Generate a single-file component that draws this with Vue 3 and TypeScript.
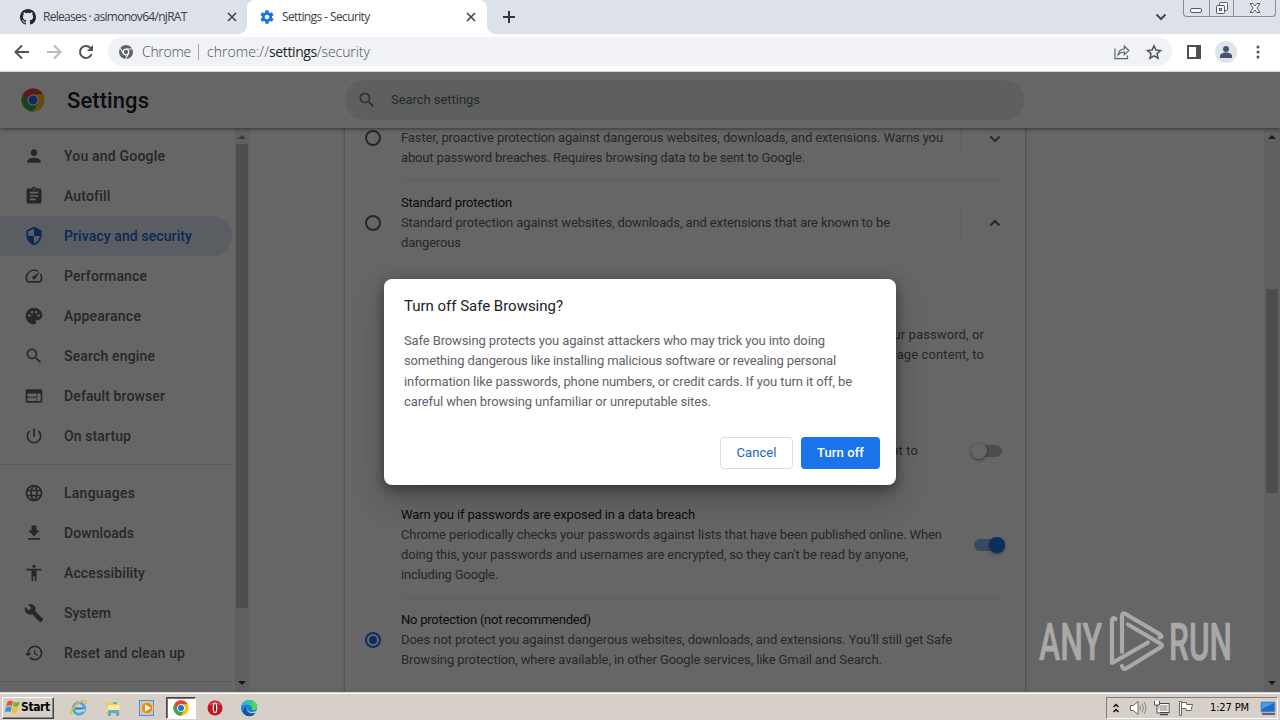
<script setup lang="ts">
import type { Directive } from 'vue'

interface MenuItem { label: string; width: number; icon: string; selected?: boolean }
interface TextLine { text: string; width: number }

// Adjusts tracking so that a single line occupies the given width.
const vFit: Directive<HTMLElement, number> = {
  mounted(el, binding) {
    const natural = el.getBoundingClientRect().width
    const count = (el.textContent ?? '').trim().length
    if (count > 1) el.style.letterSpacing = `${((binding.value - natural) / (count - 0.5)).toFixed(3)}px`
  },
}

const primaryMenu: MenuItem[] = [
  { label: 'You and Google', width: 101, icon: 'M12 12c2.21 0 4-1.79 4-4s-1.79-4-4-4-4 1.79-4 4 1.79 4 4 4zm0 2c-2.67 0-8 1.34-8 4v2h16v-2c0-2.66-5.33-4-8-4z' },
  { label: 'Autofill', width: 46, icon: 'M19 3h-4.18C14.4 1.84 13.3 1 12 1s-2.4.84-2.82 2H5c-1.1 0-2 .9-2 2v14c0 1.1.9 2 2 2h14c1.1 0 2-.9 2-2V5c0-1.1-.9-2-2-2zm-7 0c.55 0 1 .45 1 1s-.45 1-1 1-1-.45-1-1 .45-1 1-1zm2 14H7v-2h7v2zm3-4H7v-2h10v2zm0-4H7V7h10v2z' },
  { label: 'Privacy and security', width: 128, selected: true, icon: 'M12 1L3 5v6c0 5.55 3.84 10.74 9 12 5.16-1.26 9-6.45 9-12V5l-9-4zm0 10.99h7c-.53 4.12-3.28 7.79-7 8.94V12H5V6.3l7-3.11v8.8z' },
  { label: 'Performance', width: 83, icon: 'M20.38 8.57l-1.23 1.85a8 8 0 0 1-.22 7.58H5.07A8 8 0 0 1 15.58 6.85l1.85-1.23A10 10 0 0 0 3.35 19a2 2 0 0 0 1.72 1h13.85a2 2 0 0 0 1.74-1 10 10 0 0 0-.27-10.44zm-9.79 6.84a2 2 0 0 0 2.83 0l5.66-8.49-8.49 5.66a2 2 0 0 0 0 2.83z' },
  { label: 'Appearance', width: 77, icon: 'M12 2C6.49 2 2 6.49 2 12s4.49 10 10 10c1.38 0 2.5-1.12 2.5-2.5 0-.61-.23-1.2-.64-1.67-.08-.1-.13-.21-.13-.33 0-.28.22-.5.5-.5H16c3.31 0 6-2.69 6-6 0-4.96-4.49-9-10-9zm-5.5 11c-.83 0-1.5-.67-1.5-1.5S5.67 10 6.5 10s1.5.67 1.5 1.5S7.33 13 6.5 13zm3-4C8.67 9 8 8.33 8 7.5S8.67 6 9.5 6s1.5.67 1.5 1.5S10.33 9 9.500 9zm5 0c-.83 0-1.5-.67-1.500-1.500S13.670 6 14.500 6s1.500.670 1.500 1.500S15.330 9 14.500 9zm3 4c-.83 0-1.5-.67-1.5-1.5s.67-1.5 1.5-1.5 1.500.67 1.500 1.500-.67 1.500-1.500 1.500z' },
  { label: 'Search engine', width: 91, icon: 'M15.500 14h-.79l-.28-.27A6.47 6.47 0 0 0 16 9.500 6.500 6.500 0 1 0 9.500 16c1.610 0 3.090-.59 4.230-1.570l.27.28v.79l5 4.990L20.490 19l-4.990-5zm-6 0C7.010 14 5 11.990 5 9.500S7.010 5 9.500 5 14 7.010 14 9.500 11.990 14 9.500 14z' },
  { label: 'Default browser', width: 101, icon: 'M20 4H4c-1.100 0-1.990.900-1.990 2L2 18c0 1.100.900 2 2 2h16c1.100 0 2-.900 2-2V6c0-1.100-.900-2-2-2zm-5 14H4v-4h11v4zm0-5H4V9h11v4zm5 5h-4V9h4v9z' },
  { label: 'On startup', width: 67, icon: 'M13 3h-2v10h2V3zm4.830 2.170l-1.420 1.420A6.920 6.920 0 0 1 19 12a7 7 0 1 1-11.420-5.420L6.170 5.170A8.930 8.930 0 0 0 3 12a9 9 0 0 0 18 0c0-2.740-1.230-5.180-3.170-6.830z' },
]
const advancedMenu: MenuItem[] = [
  { label: 'Languages', width: 71, icon: 'M11.990 2C6.470 2 2 6.480 2 12s4.470 10 9.990 10C17.520 22 22 17.520 22 12S17.520 2 11.990 2zm6.930 6h-2.950a15.650 15.650 0 0 0-1.380-3.560A8.030 8.030 0 0 1 18.920 8zM12 4.040c.83 1.200 1.480 2.530 1.910 3.960h-3.820c.43-1.430 1.080-2.760 1.910-3.960zM4.260 14a8.200 8.200 0 0 1 0-4h3.380a16.500 16.500 0 0 0 0 4H4.260zm.82 2h2.950c.32 1.250.78 2.450 1.380 3.560A7.990 7.990 0 0 1 5.080 16zm2.950-8H5.080a7.990 7.990 0 0 1 4.330-3.560A15.650 15.650 0 0 0 8.030 8zM12 19.960A14 14 0 0 1 10.090 16h3.820A14 14 0 0 1 12 19.960zM14.340 14H9.660a14.700 14.700 0 0 1 0-4h4.680a14.700 14.700 0 0 1 0 4zm.25 5.560c.6-1.110 1.060-2.310 1.380-3.560h2.950a8.030 8.030 0 0 1-4.330 3.560zM16.360 14a16.500 16.500 0 0 0 0-4h3.380a8.200 8.200 0 0 1 0 4h-3.380z' },
  { label: 'Downloads', width: 70, icon: 'M19 9h-4V3H9v6H5l7 7 7-7zM5 18v2h14v-2H5z' },
  { label: 'Accessibility', width: 81, icon: 'M12 2c1.100 0 2 .900 2 2s-.900 2-2 2-2-.900-2-2 .900-2 2-2zm9 7h-6v13h-2v-6h-2v6H9V9H3V7h18v2z' },
  { label: 'System', width: 47, icon: 'M22.700 19l-9.100-9.100c.900-2.300.400-5-1.500-6.900-2-2-5-2.400-7.400-1.300L9 6 6 9 1.600 4.700C.4 7.100.9 10.100 2.900 12.100c1.900 1.900 4.600 2.400 6.900 1.500l9.100 9.100c.4.4 1 .4 1.400 0l2.300-2.300c.5-.4.5-1.100.1-1.400z' },
  { label: 'Reset and clean up', width: 121, icon: 'M13 3a9 9 0 0 0-9 9H1l3.890 3.890.07.14L9 12H6a7 7 0 1 1 2.050 4.940l-1.420 1.420A9 9 0 1 0 13 3zm-1 5v5l4.280 2.540.72-1.210-3.500-2.080V8H12z' },
]

const enhancedLines: TextLine[] = [
  { text: 'Faster, proactive protection against dangerous websites, downloads, and extensions. Warns you', width: 542 },
  { text: 'about password breaches. Requires browsing data to be sent to Google.', width: 404 },
]
const standardLines: TextLine[] = [
  { text: 'Standard protection against websites, downloads, and extensions that are known to be', width: 489 },
  { text: 'dangerous', width: 60 },
]
const breachLines: TextLine[] = [
  { text: 'Chrome periodically checks your passwords against lists that have been published online. When', width: 541 },
  { text: "doing this, your passwords and usernames are encrypted, so they can't be read by anyone,", width: 507 },
  { text: 'including Google.', width: 97 },
]
const noProtectionLines: TextLine[] = [
  { text: "Does not protect you against dangerous websites, downloads, and extensions. You'll still get Safe", width: 551 },
  { text: 'Browsing protection, where available, in other Google services, like Gmail and Search.', width: 481 },
]
const dialogLines: TextLine[] = [
  { text: 'Safe Browsing protects you against attackers who may trick you into doing', width: 421 },
  { text: 'something dangerous like installing malicious software or revealing personal', width: 432 },
  { text: 'information like passwords, phone numbers, or credit cards. If you turn it off, be', width: 448 },
  { text: 'careful when browsing unfamiliar or unreputable sites.', width: 307 },
]
</script>

<template>
  <div class="screen">
    <div class="tabstrip">
      <div class="tab first-tab">
        <svg class="github" width="16" height="16" viewBox="0 0 16 16"><path fill="#24292f" d="M8 0C3.580 0 0 3.580 0 8c0 3.540 2.290 6.530 5.470 7.590.4.07.55-.17.55-.38 0-.19-.01-.82-.01-1.490-2.010.37-2.530-.49-2.690-.94-.09-.23-.48-.94-.82-1.130-.28-.15-.68-.52-.01-.53.63-.01 1.080.58 1.230.82.72 1.210 1.870.87 2.330.66.07-.52.28-.87.51-1.070-1.780-.2-3.640-.89-3.640-3.950 0-.87.31-1.590.82-2.150-.08-.2-.36-1.020.08-2.120 0 0 .67-.21 2.200.82a7.600 7.600 0 0 1 4 0c1.530-1.040 2.200-.82 2.200-.82.44 1.100.16 1.920.08 2.120.51.56.82 1.270.82 2.150 0 3.070-1.870 3.750-3.650 3.950.29.25.54.73.54 1.480 0 1.070-.01 1.930-.01 2.200 0 .21.15.46.55.38A8.010 8.010 0 0 0 16 8c0-4.420-3.580-8-8-8z" /></svg>
        <span class="tab-title"><span v-fit="144" class="line">Releases · asimonov64/njRAT</span></span>
        <svg class="close" width="10" height="10" viewBox="0 0 10 10"><path d="M1 1l8 8M9 1L1 9" /></svg>
      </div>
      <div class="tab active-tab">
        <svg width="16" height="16" viewBox="0 0 24 24"><path fill="#1a73e8" d="M19.430 12.980c.04-.32.07-.64.07-.98s-.03-.66-.07-.98l2.110-1.650c.19-.15.24-.42.12-.64l-2-3.460c-.12-.22-.39-.3-.61-.22l-2.490 1a7.300 7.300 0 0 0-1.690-.98l-.38-2.650A.5.5 0 0 0 14 2h-4a.5.5 0 0 0-.49.42l-.38 2.650c-.61.25-1.170.59-1.690.98l-2.490-1a.5.5 0 0 0-.61.22l-2 3.460c-.13.22-.07.49.12.64l2.110 1.650a7.900 7.900 0 0 0 0 1.960l-2.110 1.650a.5.5 0 0 0-.12.64l2 3.460c.12.22.39.3.61.22l2.490-1c.52.4 1.080.73 1.690.98l.38 2.650c.03.24.24.42.49.42h4c.25 0 .46-.18.49-.42l.38-2.650c.61-.25 1.170-.59 1.690-.98l2.490 1c.23.09.49 0 .61-.22l2-3.460a.5.5 0 0 0-.12-.64l-2.110-1.650zM12 15.500a3.500 3.500 0 1 1 0-7 3.500 3.500 0 0 1 0 7z" /></svg>
        <span class="tab-title"><span v-fit="88" class="line">Settings - Security</span></span>
        <svg class="close" width="10" height="10" viewBox="0 0 10 10"><path d="M1 1l8 8M9 1L1 9" /></svg>
      </div>
      <svg class="new-tab" width="14" height="14" viewBox="0 0 14 14"><path d="M7 1v12M1 7h12" /></svg>
      <svg class="tab-search" width="12" height="8" viewBox="0 0 12 8"><path d="M1.500 1.500L6 6l4.500-4.500" /></svg>
      <div class="window-controls">
        <span class="wc min"><svg width="14" height="16" viewBox="0 0 14 16"><rect x="1.500" y="8.500" width="11" height="4" rx="1.500" /></svg></span>
        <span class="wc max"><svg width="14" height="16" viewBox="0 0 14 16"><rect x="4.500" y="2.500" width="8" height="8" rx="1" /><rect x="1.500" y="5.500" width="8" height="8" rx="1" /><rect x="4.500" y="8.500" width="2" height="2" /></svg></span>
        <span class="wc quit"><svg width="14" height="16" viewBox="0 0 14 16"><path d="M2 3.500h3l2 2.500 2-2.500h3L9 8l3 4.500H9L7 10l-2 2.500H2L5 8z" /></svg></span>
      </div>
    </div>

    <div class="toolbar">
      <svg class="nav" width="16" height="16" viewBox="0 0 16 16"><path d="M15 8H2M8 1.500L1.500 8 8 14.500" /></svg>
      <svg class="nav faded" width="16" height="16" viewBox="0 0 16 16"><path d="M1 8h13M8 1.500L14.500 8 8 14.500" /></svg>
      <svg class="nav" width="16" height="16" viewBox="0 0 16 16"><path d="M13.600 10A6 6 0 1 1 12.300 3.800L14 5.500" /><path class="solid" d="M15 1v6H9z" /></svg>
      <div class="omnibox">
        <svg width="14" height="14" viewBox="0 0 14 14"><circle cx="7" cy="7" r="7" fill="#5f6368" /><circle cx="7" cy="7" r="2.800" fill="#5f6368" stroke="#f0f2f5" stroke-width="1.300" /><path d="M7 4h6.200M4.400 8.500L1.300 3.300M9.600 8.500l-3 5.300" stroke="#f0f2f5" stroke-width="1.100" /></svg>
        <span class="chip"><span v-fit="49" class="line">Chrome</span></span>
        <i class="bar"></i>
        <span v-fit="62" class="line">chrome://</span><span v-fit="48" class="line dark">settings</span><span v-fit="53" class="line">/security</span>
        <svg class="share" width="16" height="16" viewBox="0 0 16 16"><path d="M1 4.500v10.200h12.500V11.500M4 11c.4-4 2.400-5.800 6.300-6V2.200l4.600 4.300-4.600 4.200V8C7.200 8 5.600 8.800 4 11z" /></svg>
        <svg class="star" width="16" height="16" viewBox="0 0 16 16"><path d="M8 1.800l1.900 4.200 4.600.5L11 9.600l1 4.600L8 11.800l-4 2.400 1-4.600L1.500 6.500l4.600-.5z" /></svg>
      </div>
      <svg class="panel" width="14" height="14" viewBox="0 0 14 14"><path d="M0 0h14v14H0zM2 2v10h7V2z" fill="#4d4f53" fill-rule="evenodd" /></svg>
      <svg class="avatar" width="22" height="22" viewBox="0 0 22 22"><circle cx="11" cy="11" r="11" fill="#dfe3ea" /><circle cx="11" cy="8" r="3" fill="#46536e" /><path fill="#46536e" d="M5 17v-2c0-2 3-3.500 6-3.500s6 1.500 6 3.500v2z" /></svg>
      <svg class="dots" width="4" height="14" viewBox="0 0 4 14"><circle cx="2" cy="2" r="1.500" /><circle cx="2" cy="7" r="1.500" /><circle cx="2" cy="12" r="1.500" /></svg>
    </div>

    <div class="viewport">
      <header class="header">
        <svg class="logo" width="24" height="24" viewBox="0 0 24 24"><circle cx="12" cy="12" r="11.500" fill="#fbc116" /><path fill="#ea4335" d="M2 6.300A11.500 11.500 0 0 1 22 6.300H12L7 15z" /><path fill="#34a853" d="M2 6.300A11.500 11.500 0 0 0 12 23.500l5-8.600-7.500 1.500z" /><circle cx="12" cy="12" r="5.600" fill="#fff" /><circle cx="12" cy="12" r="4.500" fill="#1a73e8" /></svg>
        <h1><span v-fit="82" class="line">Settings</span></h1>
        <div class="search">
          <svg width="20" height="20" viewBox="0 0 24 24"><path fill="#72767b" :d="primaryMenu[5].icon" /></svg>
          <span v-fit="89" class="line">Search settings</span>
        </div>
      </header>
      <div class="body">
        <nav class="sidebar">
          <div v-for="item in primaryMenu" :key="item.label" class="menu-item" :class="{ selected: item.selected }">
            <svg width="20" height="20" viewBox="0 0 24 24"><path :d="item.icon" /></svg>
            <span v-fit="item.width" class="line">{{ item.label }}</span>
          </div>
          <hr>
          <div v-for="item in advancedMenu" :key="item.label" class="menu-item">
            <svg width="20" height="20" viewBox="0 0 24 24"><path :d="item.icon" /></svg>
            <span v-fit="item.width" class="line">{{ item.label }}</span>
          </div>
          <hr>
        </nav>
        <div class="scroll side-scroll">
          <i class="arrow up pale"></i><i class="thumb"></i><i class="arrow down"></i>
        </div>
        <main class="main">
          <section class="card">
            <div class="option enhanced">
              <i class="radio"></i>
              <div class="copy"><p v-for="l in enhancedLines" :key="l.text"><span v-fit="l.width" class="line">{{ l.text }}</span></p></div>
              <i class="vsep"></i>
              <svg class="chevron" width="12" height="8" viewBox="0 0 12 8"><path d="M1.500 1.500L6 6l4.500-4.500" /></svg>
            </div>
            <div class="option standard">
              <i class="radio"></i>
              <div class="copy">
                <p class="strong"><span v-fit="111" class="line">Standard protection</span></p>
                <p v-for="l in standardLines" :key="l.text"><span v-fit="l.width" class="line">{{ l.text }}</span></p>
              </div>
              <i class="vsep"></i>
              <svg class="chevron" width="12" height="8" viewBox="0 0 12 8"><path d="M1.500 6.500L6 2l4.500 4.500" /></svg>
            </div>
            <div class="detail">
              <p>Checks URLs with a list of unsafe sites stored in Chrome. If a site tries to steal your password, or</p>
              <p>when you download a harmful file, Chrome may also send URLs, including bits of page content, to</p>
            </div>
            <div class="report">
              <p>URLs of some pages you visit, limited system information, and some page content to</p>
              <i class="toggle off"></i>
            </div>
            <div class="breach">
              <div class="copy">
                <p class="strong"><span v-fit="294" class="line">Warn you if passwords are exposed in a data breach</span></p>
                <p v-for="l in breachLines" :key="l.text"><span v-fit="l.width" class="line">{{ l.text }}</span></p>
              </div>
              <i class="toggle on"></i>
            </div>
            <div class="option none">
              <i class="radio checked"></i>
              <div class="copy">
                <p class="strong"><span v-fit="190" class="line">No protection (not recommended)</span></p>
                <p v-for="l in noProtectionLines" :key="l.text"><span v-fit="l.width" class="line">{{ l.text }}</span></p>
              </div>
            </div>
          </section>
        </main>
        <div class="scroll main-scroll">
          <i class="arrow up"></i><i class="thumb"></i><i class="arrow down"></i>
        </div>
      </div>

      <div class="backdrop">
        <div class="dialog">
          <h2><span v-fit="159" class="line">Turn off Safe Browsing?</span></h2>
          <p v-for="l in dialogLines" :key="l.text"><span v-fit="l.width" class="line">{{ l.text }}</span></p>
          <div class="actions">
            <button class="cancel"><span v-fit="40" class="line">Cancel</span></button>
            <button class="confirm"><span v-fit="47" class="line">Turn off</span></button>
          </div>
        </div>
      </div>

      <svg class="watermark" width="204" height="66" viewBox="1037 608 204 66">
        <g fill="#a9a9a9" stroke="#a9a9a9" stroke-width=".7" font-family="Roboto, sans-serif" font-size="52" font-weight="500">
          <text x="1039" y="659.500" textLength="63" lengthAdjust="spacingAndGlyphs">ANY</text>
          <text x="1169" y="659.500" textLength="63" lengthAdjust="spacingAndGlyphs">RUN</text>
        </g>
        <g fill="none" stroke="#a9a9a9" stroke-width="4.200" stroke-linecap="round" stroke-linejoin="round">
          <path d="M1115.500 619q-3.500-2.500-3.500 2v42l36-20.500" />
          <path d="M1122 652v-36q0-4 3.500-2l34 20q4 2.500 0 3.500" />
          <path d="M1128 624.500l33 19.500q2 1.500 0 3l-34 21q-4 2.500-5-2" />
        </g>
      </svg>
    </div>

    <div class="taskbar">
      <div class="start">
        <svg width="16" height="16" viewBox="0 0 16 16"><path fill="#e5562c" d="M2.500 2.500Q5 .8 8 2.300L7 7Q4 6 1.200 7.500z" /><path fill="#7db72f" d="M8.800 2.500Q11.500 4 15 2.300L13.500 7.300Q10.500 8.800 7.800 7.300z" /><path fill="#3d8fdc" d="M1 8.400Q4 7 6.700 8L5.600 13Q3 12 0 13.300z" /><path fill="#f8bd23" d="M7.500 8.300Q10 9.800 13.200 8.300L12 13Q9 15 6.300 13.300z" /></svg>
        <span v-fit="29" class="line">Start</span>
      </div>
      <div class="quick">
        <span class="slot"><svg width="18" height="18" viewBox="0 0 18 18"><circle cx="9" cy="9.500" r="5.700" fill="none" stroke="#42aee5" stroke-width="3" /><path d="M5 9.500h8.500" stroke="#2689cc" stroke-width="2.200" /><path d="M15 11.500h-4" stroke="#d8d1c8" stroke-width="2" /><path d="M2 15C-2 16 4 5 12 2q6-2 4 3" fill="none" stroke="#e8ba36" stroke-width="1.500" /></svg></span>
        <span class="slot"><svg width="18" height="18" viewBox="0 0 18 18"><path fill="#edcb65" d="M2 3h5l1 2h8v11H2z" /><path fill="#f9e9a6" d="M4 6h12l-1 7H3z" /><path fill="#58afd4" d="M4 11h11v6h-3v-3H7v3H4z" /><path fill="#71b96a" d="M9 3h4v2H9z" /></svg></span>
        <span class="slot"><svg width="18" height="18" viewBox="0 0 18 18"><rect x="1.500" y="1.500" width="14" height="15" fill="#a8cae5" stroke="#5d91bd" /><circle cx="9" cy="9" r="6" fill="#f18b18" stroke="#fbd29a" /><path fill="#fff" d="M7 5.500l6 3.500-6 3.500z" /></svg></span>
        <span class="slot pressed"><svg width="16" height="16" viewBox="0 0 24 24"><circle cx="12" cy="12" r="11.500" fill="#fbc116" /><path fill="#ea4335" d="M2 6.300A11.500 11.500 0 0 1 22 6.300H12L7 15z" /><path fill="#34a853" d="M2 6.300A11.500 11.500 0 0 0 12 23.500l5-8.600-7.500 1.500z" /><circle cx="12" cy="12" r="5.800" fill="#fff" /><circle cx="12" cy="12" r="4.500" fill="#1a73e8" /></svg></span>
        <span class="slot"><svg width="16" height="16" viewBox="0 0 16 16"><circle cx="8" cy="8" r="7.500" fill="#c5161c" /><path d="M2 5.500A7 7 0 0 1 14 5.500Q8 2 2 5.500" fill="#e8686b" /><ellipse cx="8" cy="8" rx="2.300" ry="5.300" fill="#fff" /><ellipse cx="8" cy="8" rx="1" ry="4.400" fill="#a20e13" /></svg></span>
        <span class="slot"><svg width="18" height="18" viewBox="0 0 18 18"><circle cx="9" cy="9" r="8" fill="#1683d2" /><path fill="#35c1b1" d="M1.500 7Q4 1 9.500 1q7 .5 7.500 7-1 4-5.500 3 1.500-2-.5-4Q7 4 1.500 7z" /><path fill="#5cd34f" d="M12 2q5 2 5 6.500-1 3.300-5.500 2.500 2-2 .5-4z" /><path fill="#12529a" d="M6 8q-1 5 4 6.500 3 .8 5.500-.7Q12 19 6 16.500 0 12 6 8z" /><path fill="#d8d1c8" d="M8.500 8Q6.500 12 11 13q3 .5 6-1.500l1 1-2 1q-8 2-8.500-3z" /></svg></span>
      </div>
      <div class="tray">
        <svg width="8" height="12" viewBox="0 0 8 12"><path d="M1.500 5L4 2.500 6.500 5M1.500 10L4 7.500 6.500 10" fill="none" stroke="#111" stroke-width="1.500" /></svg>
        <svg class="speaker" width="18" height="16" viewBox="0 0 18 16"><path d="M1.500 5.500h3L9 1.500v13l-4.500-4h-3z" fill="#fff" stroke="#666" /><path d="M11 5.500q1.500 2.500 0 5M13 3.500q3 4.500 0 9M15 2q4 6 0 12" fill="none" stroke="#888" /></svg>
        <svg class="network" width="18" height="16" viewBox="0 0 18 16"><rect x="5" y="3.500" width="11" height="9" fill="#bbb" stroke="#444" /><rect x="6" y="4.500" width="9" height="7" fill="none" stroke="#fff" /><path d="M7 14.500h8" stroke="#444" stroke-width="1.500" /><path d="M1.500 1v4h5V1M4 5v8h3" fill="#fff" stroke="#555" /></svg>
        <svg class="flag" width="18" height="16" viewBox="0 0 18 16"><path d="M2.500 15.500v-14h2v14z" fill="#fff" stroke="#666" /><path d="M4.500 2.500h5v2h6l-1.500 6H9v-2H4.500z" fill="#fff" stroke="#666" /></svg>
        <span class="clock"><span v-fit="39" class="line">1:27 PM</span></span>
        <svg class="monitor" width="16" height="14" viewBox="0 0 16 14"><path d="M1 1h14v10H1z" fill="#236ac0" stroke="#6f9fcd" /><path d="M2 2h12L2 8z" fill="#4b98e4" /><path d="M2 13h13" stroke="#345" stroke-width="1.500" /></svg>
      </div>
    </div>
  </div>
</template>

<style>
body { overflow: hidden; }
</style>

<style scoped>
* { box-sizing: border-box; }
p, h1, h2 { margin: 0; font-weight: 400; }
svg { display: block; flex: none; }
i { display: block; flex: none; }
.line { display: inline-block; white-space: nowrap; flex: none; }
.screen { width: 1280px; height: 720px; display: flex; flex-direction: column; overflow: hidden; font-family: Roboto, "Liberation Sans", sans-serif; font-size: 13px; background: #fff; }

.tabstrip { height: 34px; flex: none; display: flex; background: #dde1e8; font: 12px/34px "Open Sans", sans-serif; color: #3c4043; }
.tab { display: flex; align-items: center; height: 34px; }
.first-tab { width: 247px; padding-left: 20px; }
.first-tab .tab-title { margin-left: 7px; width: 183px; }
.active-tab { width: 240px; padding-left: 12px; background: #fff; border-radius: 8px 8px 0 0; position: relative; }
.active-tab::before, .active-tab::after { content: ""; position: absolute; bottom: 0; width: 8px; height: 8px; }
.active-tab::before { left: -8px; background: radial-gradient(circle at 0 0, transparent 7.5px, #fff 8px); }
.active-tab::after { right: -8px; background: radial-gradient(circle at 100% 0, transparent 7.5px, #fff 8px); }
.active-tab .tab-title { margin-left: 7px; width: 183px; }
.close { fill: none; stroke: #45494e; stroke-width: 1.7; margin-left: 1px; }
.new-tab { margin: 10px 0 0 15px; fill: none; stroke: #34383d; stroke-width: 2; }
.tab-search { margin: 13px 16px 0 auto; fill: none; stroke: #45494e; stroke-width: 2; }
.window-controls { display: flex; width: 93px; height: 17px; margin-right: 4px; border: 1px solid #858b98; border-top: 0; border-radius: 0 0 4px 4px; }
.wc { display: flex; justify-content: center; width: 25px; height: 16px; fill: #f5f6f8; stroke: #555b66; }
.wc + .wc { border-left: 1px solid #858b98; }
.quit { width: 42px; }

.toolbar { height: 38px; flex: none; display: flex; align-items: center; padding: 0 20px 2px 14px; border-bottom: 1px solid #d0d3d7; }
.nav { margin-right: 16px; fill: none; stroke: #505357; stroke-width: 2; }
.nav .solid { fill: #505357; stroke: none; }
.faded { stroke: #b8babd; }
.omnibox { display: flex; align-items: center; width: 1064px; height: 29px; margin-left: -2px; padding-left: 11px; border-radius: 15px; background: #f0f2f5; font: 300 14px/29px "Open Sans", sans-serif; color: #4a4e53; }
.chip { width: 49px; margin-left: 9px; }
.bar { width: 1px; height: 16px; margin: 0 8px 0 7px; background: #a5a8ad; }
.dark { color: #202124; font-weight: 400; }
.share { margin-left: auto; margin-right: 16px; fill: none; stroke: #5f6368; stroke-width: 1.2; }
.star { margin-right: 10px; fill: none; stroke: #505357; stroke-width: 1.5; }
.panel { margin-left: 15px; }
.avatar { margin-left: 14px; }
.dots { margin-left: 19px; fill: #505357; }

.viewport { position: relative; height: 620px; flex: none; display: flex; flex-direction: column; overflow: hidden; background: #fff; }
.header { position: relative; z-index: 1; height: 56px; flex: none; display: flex; align-items: center; padding-left: 21px; background: #fff; box-shadow: 0 1px 4px rgba(0, 0, 0, .5); }
.header h1 { margin-left: 22px; width: 278px; font-size: 22px; font-weight: 500; color: #202124; }
.search { display: flex; align-items: center; width: 679px; height: 40px; padding: 0 0 1px 12px; gap: 14px; border-radius: 20px; background: #eaf1ef; font-size: 13px; color: #5f6368; }
.body { flex: 1; display: flex; min-height: 0; overflow: hidden; }
.sidebar { width: 235px; padding-top: 8px; flex: none; }
.menu-item { display: flex; align-items: center; width: 232px; height: 40px; padding-left: 24px; gap: 20px; font-size: 14px; font-weight: 500; color: #5f6368; fill: #5f6368; }
.menu-item.selected { background: #e0eaf8; border-radius: 0 20px 20px 0; color: #1967d2; fill: #1967d2; }
.sidebar hr { width: 232px; height: 1px; margin: 8px 0; border: 0; background: #dfe1e4; }
.scroll { display: flex; flex-direction: column; align-items: center; flex: none; background: #f1f1f1; }
.side-scroll { width: 14px; }
.side-scroll .thumb { width: 12px; height: 464px; margin-top: 5px; margin-bottom: 73px; background: #c1c1c1; }
.arrow { width: 8px; height: 4px; background: #3a3a3a; }
.up { margin-top: 7px; clip-path: polygon(50% 0, 100% 100%, 0 100%); }
.down { clip-path: polygon(0 0, 100% 0, 50% 100%); }
.pale { background: #8c8c8c; }
.main-scroll { width: 16px; margin-left: auto; }
.main-scroll .thumb { width: 12px; height: 204px; margin-top: 150px; margin-bottom: 188px; background: #c1c1c1; }
.main { width: 776px; padding-left: 96px; }
.card { width: 680px; height: 580px; display: flex; flex-direction: column; box-shadow: 0 0 2px rgba(60, 64, 67, .5), 0 1px 3px 1px rgba(60, 64, 67, .15); color: #5f6368; font-size: 13px; line-height: 20px; white-space: nowrap; }
.option { display: flex; padding-left: 20px; }
.copy { width: 559px; }
.strong { color: #202124; }
.radio { width: 16px; height: 16px; margin-right: 20px; border: 2px solid #5f6368; border-radius: 50%; }
.enhanced { height: 52px; }
.enhanced .radio { margin-top: 2px; }
.vsep { width: 1px; background: #eff0f1; }
.enhanced .vsep { height: 25px; }
.chevron { margin-left: 28px; fill: none; stroke: #5f6368; stroke-width: 2; }
.enhanced .chevron { margin-top: 7px; }
.standard { height: 145px; position: relative; padding-top: 13px; }
.standard::before, .none::before { content: ""; position: absolute; top: 0; left: 56px; width: 600px; height: 1px; background: #f0f1f2; }
.standard .radio { margin-top: 22px; }
.standard .vsep { height: 32px; margin-top: 14px; }
.standard .chevron { margin-top: 26px; }
.detail { width: 639px; height: 116px; display: flex; flex-direction: column; align-items: flex-end; letter-spacing: .1px; }
.report { height: 64px; display: flex; align-items: flex-start; justify-content: flex-end; letter-spacing: .1px; }
.report .toggle { margin: 2px 22px 0 53px; }
.toggle { position: relative; width: 32px; height: 16px; }
.toggle::before { content: ""; position: absolute; top: 2px; left: 4px; width: 27px; height: 12px; border-radius: 6px; background: #bdc1c6; }
.toggle::after { content: ""; position: absolute; top: 0; left: 0; width: 16px; height: 16px; border-radius: 50%; background: #fff; box-shadow: 0 1px 3px rgba(0, 0, 0, .5); }
.toggle.on::before { left: 0; background: #8cb8f4; }
.toggle.on::after { left: 15px; background: #1a73e8; }
.breach { display: flex; padding-left: 56px; height: 93px; }
.breach .copy { width: 573px; }
.breach .toggle { margin-top: 32px; }
.none { position: relative; padding-top: 12px; }
.none .radio { margin-top: 22px; }
.checked { border-color: #1a73e8; padding: 2px; background: #1a73e8; background-clip: content-box; }

.backdrop { position: absolute; inset: 0; z-index: 2; background: rgba(0, 0, 0, .6); display: flex; justify-content: center; }
.dialog { width: 512px; height: 206px; margin-top: 207px; padding: 15px 16px 16px 20px; display: flex; flex-direction: column; border-radius: 8px; background: #fff; box-shadow: 0 0 14px rgba(0, 0, 0, .12), 0 14px 32px rgba(0, 0, 0, .24), 0 5px 10px rgba(0, 0, 0, .25); color: #5f6368; font-size: 13px; line-height: 20.3px; }
.dialog h2 { height: 37px; font-size: 15px; line-height: 24px; color: #202124; }
.actions { display: flex; justify-content: flex-end; gap: 8px; margin-top: auto; }
button { height: 32px; padding: 0 0 1px; border-radius: 4px; font: 400 13px Roboto, sans-serif; }
.cancel { width: 73px; border: 1px solid #dadce0; background: #fff; color: #1a62c8; }
.confirm { width: 79px; border: 0; background: #1a73e8; color: #fff; font-weight: 500; }
.watermark { position: absolute; z-index: 3; left: 1037px; top: 536px; }

.taskbar { height: 28px; flex: none; display: flex; align-items: center; padding: 2px 2px 0; background: #d7d0c8; border-top: 1px solid #d7d0c8; box-shadow: inset 0 1px #fff; font-family: "DejaVu Sans Condensed", "DejaVu Sans", sans-serif; font-size: 11px; color: #000; }
.start { display: flex; align-items: center; width: 52px; height: 22px; padding: 0 0 2px 2px; border: 1px solid; border-color: #fff #444 #444 #fff; box-shadow: inset -1px -1px #8b867f; font-size: 12px; font-weight: 700; }
.quick { display: flex; gap: 4px; margin-left: 10px; }
.slot { display: flex; align-items: center; justify-content: center; width: 30px; height: 22px; }
.pressed { background: #fff; border: 1px solid; border-color: #444 #fff #fff #444; box-shadow: inset 1px 1px #777; }
.tray { display: flex; align-items: center; width: 172px; height: 22px; margin-left: auto; padding-left: 5px; border: 1px solid; border-color: #817c75 #fff #fff #817c75; }
.speaker { margin-left: 9px; }
.network { margin-left: 6px; }
.flag { margin-left: 6px; }
.clock { width: 42px; margin-left: 15px; }
.monitor { margin-left: 8px; }
</style>
